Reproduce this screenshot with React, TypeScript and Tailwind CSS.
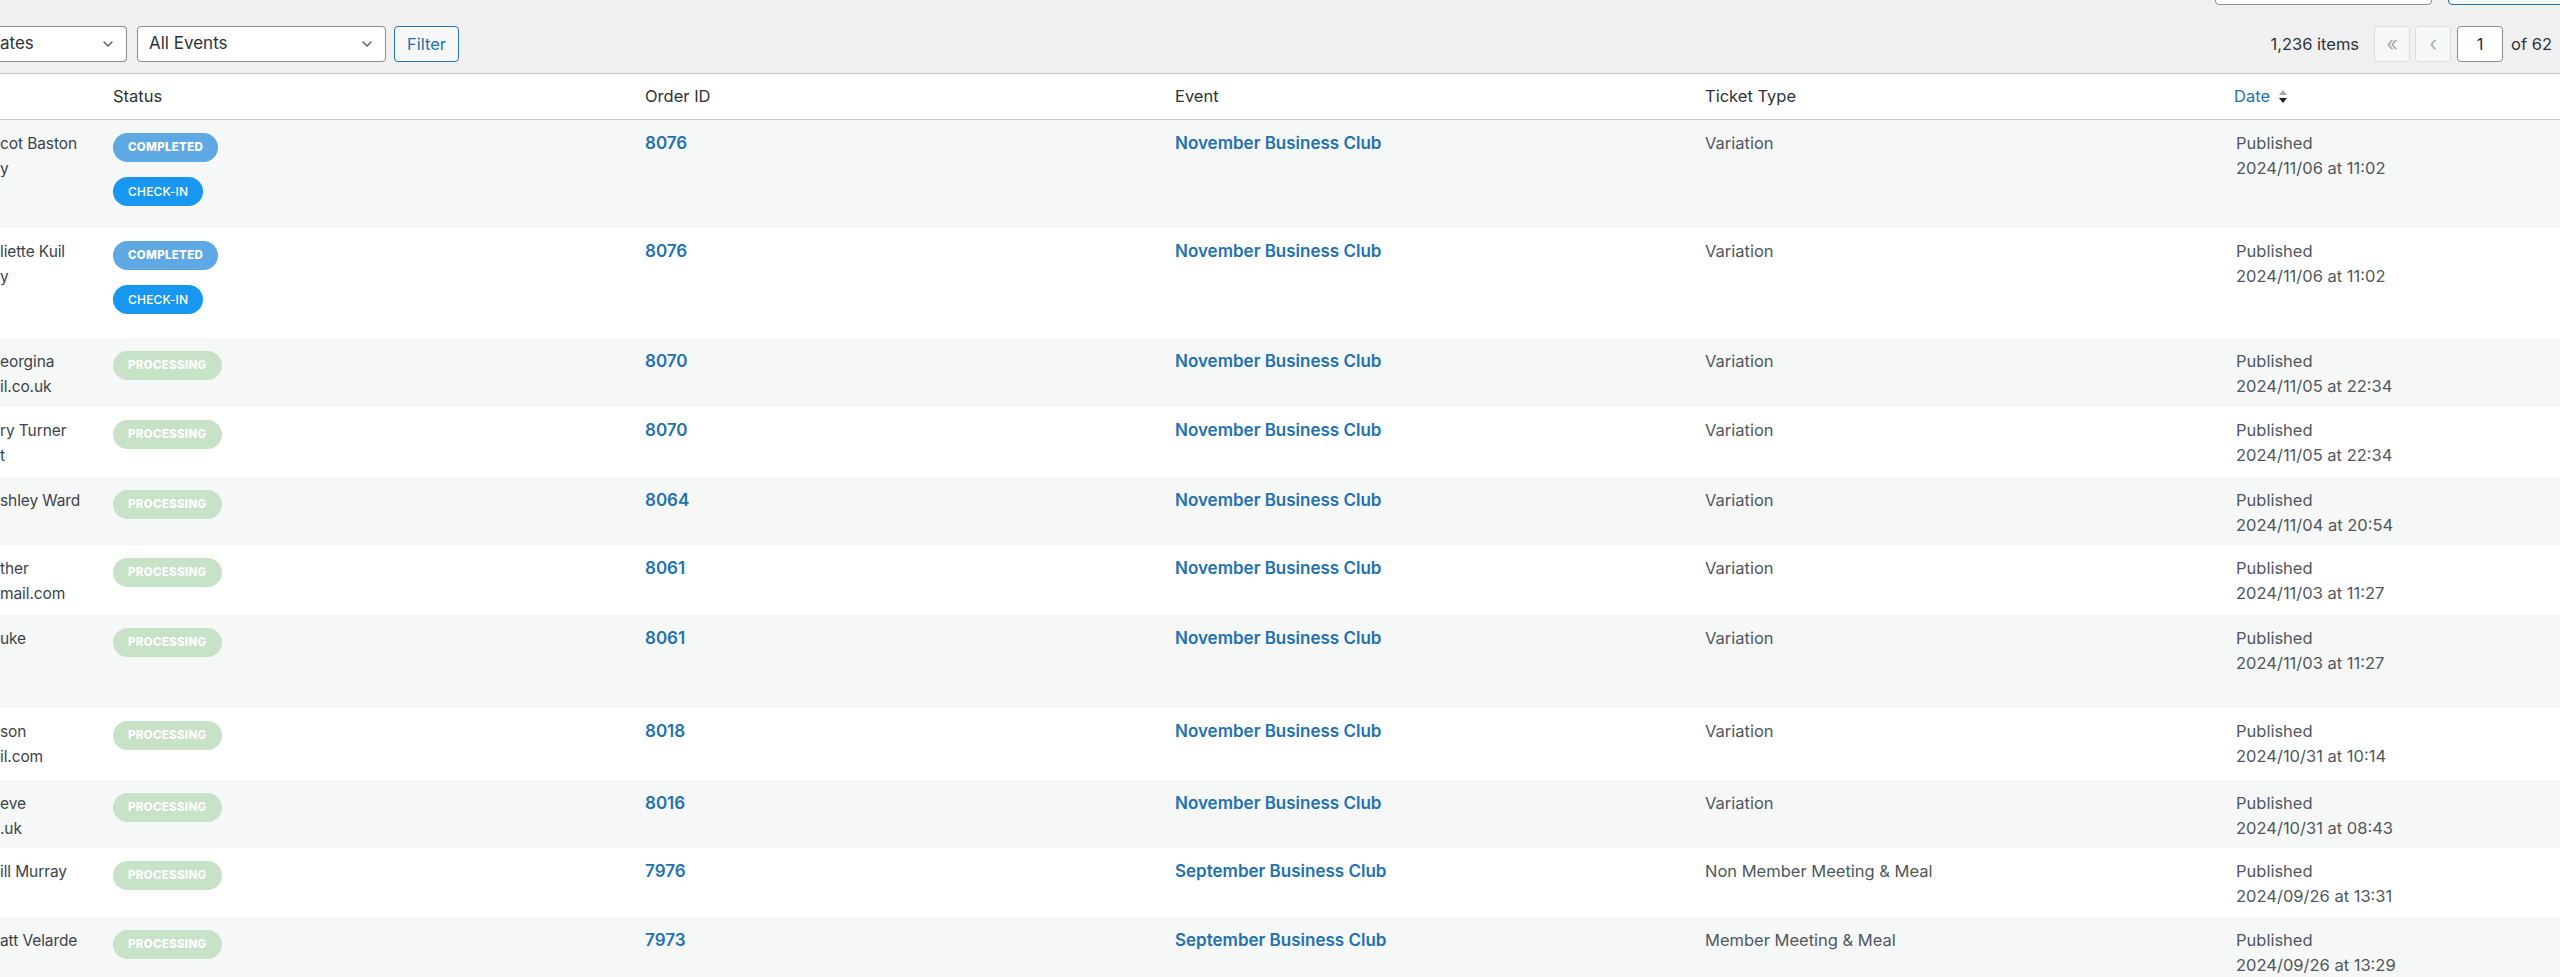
import { ChevronDown } from "lucide-react";

type Row = {
  name: string[];
  badges: ("completed" | "checkin" | "processing")[];
  order: string;
  event: string;
  ticket: string;
  date: string;
  h: string;
};

const NOV = "November Business Club";
const SEP = "September Business Club";

const ROWS: Row[] = [
  { name: ["cot Baston", "y"], badges: ["completed", "checkin"], order: "8076", event: NOV, ticket: "Variation", date: "2024/11/06 at 11:02", h: "h-[108px]" },
  { name: ["liette Kuil", "y"], badges: ["completed", "checkin"], order: "8076", event: NOV, ticket: "Variation", date: "2024/11/06 at 11:02", h: "h-[110px]" },
  { name: ["eorgina", "il.co.uk"], badges: ["processing"], order: "8070", event: NOV, ticket: "Variation", date: "2024/11/05 at 22:34", h: "h-[69px]" },
  { name: ["ry Turner", "t"], badges: ["processing"], order: "8070", event: NOV, ticket: "Variation", date: "2024/11/05 at 22:34", h: "h-[70px]" },
  { name: ["shley Ward"], badges: ["processing"], order: "8064", event: NOV, ticket: "Variation", date: "2024/11/04 at 20:54", h: "h-[68px]" },
  { name: ["ther", "mail.com"], badges: ["processing"], order: "8061", event: NOV, ticket: "Variation", date: "2024/11/03 at 11:27", h: "h-[70px]" },
  { name: ["uke"], badges: ["processing"], order: "8061", event: NOV, ticket: "Variation", date: "2024/11/03 at 11:27", h: "h-[93px]" },
  { name: ["son", "il.com"], badges: ["processing"], order: "8018", event: NOV, ticket: "Variation", date: "2024/10/31 at 10:14", h: "h-[72px]" },
  { name: ["eve", ".uk"], badges: ["processing"], order: "8016", event: NOV, ticket: "Variation", date: "2024/10/31 at 08:43", h: "h-[68px]" },
  { name: ["ill Murray"], badges: ["processing"], order: "7976", event: SEP, ticket: "Non Member Meeting & Meal", date: "2024/09/26 at 13:31", h: "h-[69px]" },
  { name: ["att Velarde"], badges: ["processing"], order: "7973", event: SEP, ticket: "Member Meeting & Meal", date: "2024/09/26 at 13:29", h: "h-[70px]" },
];

const GRID = "grid grid-cols-[100px_532px_530px_530px_531px_1fr]";

function Badge({ kind }: { kind: Row["badges"][number] }) {
  if (kind === "completed")
    return (
      <span className="flex h-[29px] items-center rounded-full bg-[#5ea8e3] px-[15px] text-[11.5px] font-extrabold tracking-[0.3px] text-white">
        COMPLETED
      </span>
    );
  if (kind === "checkin")
    return (
      <span className="flex h-[29px] items-center rounded-full bg-[#1897f0] px-[15px] text-[12px] font-medium tracking-[0.2px] text-white">
        CHECK-IN
      </span>
    );
  return (
    <span className="flex h-[29px] items-center rounded-full bg-[#c8e2c8] px-[15px] text-[11.5px] font-extrabold tracking-[0.3px] text-white">
      PROCESSING
    </span>
  );
}

function SortIcon() {
  return (
    <svg width="10" height="18" viewBox="0 0 10 18" className="ml-[8px]">
      <path d="M1 7 L5 2 L9 7 Z" fill="#a7aaad" />
      <path d="M1 10 L9 10 L5 15 Z" fill="#1d2327" />
    </svg>
  );
}

export default function App() {
  return (
    <div className="h-[977px] w-full overflow-hidden bg-[#f0f0f1] font-['Inter',sans-serif] text-[16.5px] text-[#50575e]">
      {/* search box, mostly scrolled off the top */}
      <div className="flex h-[5px] items-end">
        <div className="ml-[2215px] h-[36px] w-[217px] shrink-0 rounded-[4px] border border-[#8c8f94] bg-white" />
        <div className="ml-[16px] h-[36px] w-[140px] shrink-0 rounded-[4px] border border-[#2271b1] bg-[#f6f7f7]" />
      </div>

      {/* tablenav */}
      <div className="mt-[21px] flex h-[36px] items-center overflow-hidden">
        <div className="flex items-center">
          <div className="flex h-[36px] w-[127px] items-center justify-between rounded-r-[4px] border border-l-0 border-[#8c8f94] bg-white pr-[10px] text-[17px] text-[#2c3338]">
            <span>ates</span>
            <ChevronDown className="h-[16px] w-[16px] text-[#50575e]" strokeWidth={2} />
          </div>
          <div className="ml-[10px] flex h-[36px] w-[249px] items-center justify-between rounded-[4px] border border-[#8c8f94] bg-white pl-[11px] pr-[10px] text-[17px] text-[#2c3338]">
            <span>All Events</span>
            <ChevronDown className="h-[16px] w-[16px] text-[#50575e]" strokeWidth={2} />
          </div>
          <button className="ml-[8px] flex h-[36px] w-[65px] items-center justify-center rounded-[4px] border border-[#2271b1] bg-[#f6f7f7] text-[16.5px] text-[#2271b1]">
            Filter
          </button>
        </div>
        <div className="ml-auto mr-[-36px] flex shrink-0 items-center">
          <span className="text-[#2c3338]">1,236 items</span>
          <span className="ml-[15px] flex h-[36px] w-[36px] items-center justify-center rounded-[4px] border border-[#dcdcde] bg-[#f6f7f7] text-[20px] text-[#a7aaad]">
            «
          </span>
          <span className="ml-[5px] flex h-[36px] w-[36px] items-center justify-center rounded-[4px] border border-[#dcdcde] bg-[#f6f7f7] text-[20px] text-[#a7aaad]">
            ‹
          </span>
          <span className="ml-[6px] flex h-[36px] w-[46px] items-center justify-center rounded-[4px] border border-[#8c8f94] bg-white text-[#2c3338]">
            1
          </span>
          <span className="ml-[8px] text-[#2c3338]">of 62</span>
          <span className="ml-[8px] h-[36px] w-[36px] rounded-[4px] border border-[#2271b1] bg-[#f6f7f7]" />
        </div>
      </div>

      {/* table */}
      <div className="mt-[11px] border-t border-[#c3c4c7] bg-white">
        <div className={`${GRID} h-[46px] items-center border-b border-[#c3c4c7] text-[#2c3338]`}>
          <div />
          <div className="pl-[13px]">Status</div>
          <div className="pl-[13px]">Order ID</div>
          <div className="pl-[13px]">Event</div>
          <div className="pl-[13px]">Ticket Type</div>
          <div className="flex items-center pl-[11px] text-[#2271b1]">
            Date
            <SortIcon />
          </div>
        </div>

        {ROWS.map((r, i) => (
          <div
            key={i}
            className={`${GRID} ${r.h} leading-[25px] ${i % 2 === 0 ? "bg-[#f6f7f7]" : "bg-white"}`}
          >
            <div className="overflow-hidden whitespace-nowrap pt-[11px] text-[15.5px] tracking-[-0.1px] text-[#3c434a]">
              {r.name.map((n) => (
                <div key={n}>{n}</div>
              ))}
            </div>
            <div className="flex flex-col items-start gap-[15px] pl-[13px] pt-[13px]">
              {r.badges.map((b) => (
                <Badge key={b} kind={b} />
              ))}
            </div>
            <div className="pl-[13px] pt-[11px] text-[17px] font-semibold text-[#2271b1]">{r.order}</div>
            <div className="pl-[13px] pt-[11px] text-[17px] font-semibold text-[#2271b1]">{r.event}</div>
            <div className="pl-[13px] pt-[11px]">{r.ticket}</div>
            <div className="pl-[13px] pt-[11px]">
              <div>Published</div>
              <div>{r.date}</div>
            </div>
          </div>
        ))}
      </div>
    </div>
  );
}
